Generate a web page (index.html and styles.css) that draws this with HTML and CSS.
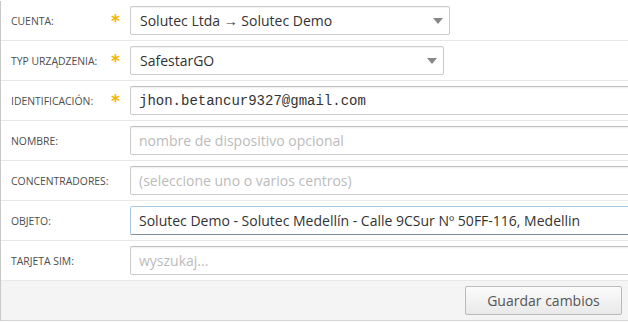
FILE: index.html
```html
<!DOCTYPE html>
<html lang="es">
<head>
    <meta charset="UTF-8">
    <title>Dispositivo</title>
    <link rel="stylesheet" href="styles.css">
</head>
<body>

    <form class="device-form">
        <div class="form-row">
            <label class="form-label">Cuenta:</label>
            <span class="required">*</span>
            <div class="select-box select-account">
                <span>Solutec Ltda → Solutec Demo</span>
                <b class="arrow"></b>
            </div>
        </div>
        <div class="form-row">
            <label class="form-label">Typ urządzenia:</label>
            <span class="required">*</span>
            <div class="select-box select-type">
                <span>SafestarGO</span>
                <b class="arrow"></b>
            </div>
        </div>
        <div class="form-row">
            <label class="form-label">Identificación:</label>
            <span class="required">*</span>
            <input type="text" class="text-input mono" value="jhon.betancur9327@gmail.com">
        </div>
        <div class="form-row">
            <label class="form-label">Nombre:</label>
            <span class="required"></span>
            <input type="text" class="text-input" placeholder="nombre de dispositivo opcional">
        </div>
        <div class="form-row">
            <label class="form-label">Concentradores:</label>
            <span class="required"></span>
            <input type="text" class="text-input" placeholder="(seleccione uno o varios centros)">
        </div>
        <div class="form-row">
            <label class="form-label">Objeto:</label>
            <span class="required"></span>
            <input type="text" class="text-input active" value="Solutec Demo - Solutec Medellín - Calle 9CSur Nº 50FF-116, Medellin">
        </div>
        <div class="form-row">
            <label class="form-label">Tarjeta SIM:</label>
            <span class="required"></span>
            <input type="text" class="text-input" placeholder="wyszukaj...">
        </div>
        <div class="form-footer">
            <button type="submit" class="btn-save">Guardar cambios</button>
        </div>
    </form>

</body>
</html>
```

FILE: styles.css
```css
body {
    margin: 0;
    padding-top: 1px;
    background: #fff;
    font-family: "Open Sans", "Noto Sans", sans-serif;
    overflow: hidden;
}
.device-form {
    width: 627px;
    border-left: 1px solid #c8c8c8;
}
.form-row {
    display: flex;
    align-items: center;
    height: 40px;
    box-sizing: border-box;
    border-bottom: 1px solid #e8e8e8;
}
.form-label {
    flex: none;
    width: 100px;
    padding-left: 10px;
    font-size: 10.4px;
    text-transform: uppercase;
    color: #4d4d4d;
}
.required {
    flex: none;
    width: 19px;
    font-family: "DejaVu Sans", sans-serif;
    font-weight: bold;
    font-size: 17px;
    color: #f5b400;
    line-height: 1;
    margin-top: 1px;
}
.select-box {
    position: relative;
    flex: none;
    display: flex;
    align-items: center;
    height: 29px;
    box-sizing: border-box;
    padding-left: 9px;
    border: 1px solid #ccc;
    border-radius: 2px;
    box-shadow: inset 0 1px 1px rgba(0, 0, 0, 0.06);
    font-size: 14px;
    color: #333;
}
.select-account {
    width: 320px;
}
.select-type {
    width: 314px;
}
.arrow {
    position: absolute;
    right: 6px;
    top: 11px;
    border-left: 5px solid transparent;
    border-right: 5px solid transparent;
    border-top: 6px solid #888;
}
.text-input {
    flex: none;
    width: 520px;
    height: 29px;
    box-sizing: border-box;
    padding: 0 8px;
    border: 1px solid #ccc;
    border-top-color: #c0c0c0;
    border-radius: 2px;
    box-shadow: inset 0 1px 2px rgba(0, 0, 0, 0.07);
    font-family: "Open Sans", "Noto Sans", sans-serif;
    font-size: 14px;
    color: #333;
    outline: none;
}
.text-input::placeholder {
    color: #bbb;
}
.mono {
    font-family: "Liberation Mono", monospace;
    font-size: 14px;
}
.active {
    border-color: #a9cbe6;
    border-bottom-color: #7f8d98;
    box-shadow: none;
}
.form-footer {
    display: flex;
    justify-content: flex-end;
    align-items: center;
    height: 40px;
    box-sizing: border-box;
    padding-right: 6px;
    background: #f4f4f4;
    border-bottom: 1px solid #d4d4d4;
}
.btn-save {
    height: 29px;
    width: 157px;
    border: 1px solid #bbb;
    border-radius: 2px;
    background: linear-gradient(#fbfbfb, #e9e9e9);
    font-family: "Open Sans", "Noto Sans", sans-serif;
    font-size: 14px;
    color: #555;
}
```
